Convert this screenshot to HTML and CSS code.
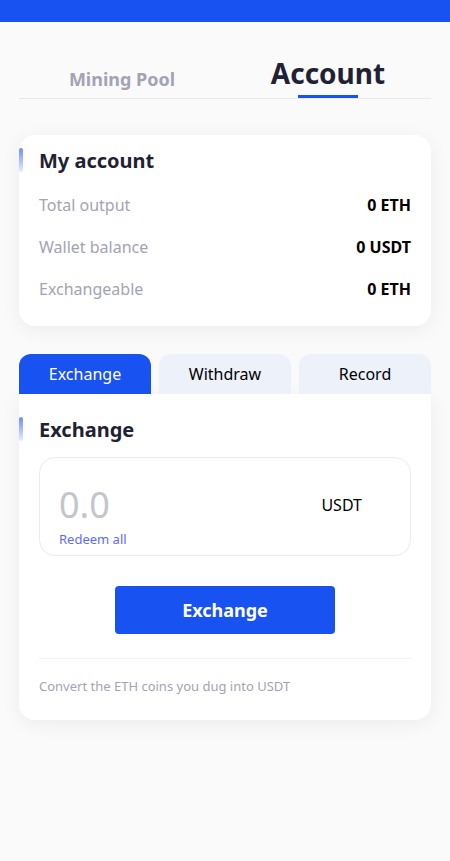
FILE: index.html
```html
<!DOCTYPE html>
<html>
<head>
<meta charset="utf-8">
<link rel="stylesheet" href="styles.css">
</head>
<body>
<div class="topbar"></div>
<nav class="nav">
  <div class="nav-item">Mining Pool</div>
  <div class="nav-item active">Account</div>
</nav>

<section class="card account">
  <h2 class="title">My account</h2>
  <div class="row"><span class="label">Total output</span><span class="value">0 ETH</span></div>
  <div class="row"><span class="label">Wallet balance</span><span class="value">0 USDT</span></div>
  <div class="row"><span class="label">Exchangeable</span><span class="value">0 ETH</span></div>
</section>

<div class="tabs">
  <div class="tab active">Exchange</div>
  <div class="tab">Withdraw</div>
  <div class="tab">Record</div>
</div>
<section class="card panel">
  <h2 class="title">Exchange</h2>
  <div class="input-box">
    <div class="input-row">
      <span class="amount">0.0</span>
      <span class="unit">USDT</span>
    </div>
    <a class="redeem">Redeem all</a>
  </div>
  <div class="btn-wrap"><button class="btn">Exchange</button></div>
  <div class="divider"></div>
  <p class="note">Convert the ETH coins you dug into USDT</p>
</section>
</body>
</html>
```
FILE: styles.css
```css
* { box-sizing: border-box; }
html, body { margin: 0; padding: 0; }
body {
  background: #fafafb;
  font-family: "Noto Sans", "Open Sans", sans-serif;
  color: #1f2233;
  width: 450px;
  min-height: 861px;
}
.topbar { height: 22px; background: #1852f1; }
.nav {
  display: flex;
  margin: 32px 19px 0;
  border-bottom: 1px solid #e6e8f0;
  height: 45px;
  align-items: flex-end;
}
.nav-item {
  flex: 1;
  text-align: center;
  font-size: 18px;
  font-weight: 700;
  color: #a3a3b3;
  padding-bottom: 7px;
}
.nav-item.active {
  font-size: 28px;
  font-weight: 700;
  color: #1f2233;
  position: relative;
  padding-bottom: 11px;
  line-height: 1;
}
.nav-item.active::after {
  content: "";
  position: absolute;
  left: 50%;
  bottom: 0;
  width: 60px;
  height: 3px;
  margin-left: -30px;
  background: #1852f1;
}
.card {
  background: #fff;
  margin: 0 19px;
  border-radius: 16px;
  box-shadow: 0 4px 20px rgba(0,0,0,0.06);
  padding: 0 20px;
}
.account { margin-top: 36px; padding-top: 13px; padding-bottom: 16px; }
.title {
  margin: 0;
  font-size: 20px;
  font-weight: 700;
  line-height: 26px;
  position: relative;
  color: #1f2233;
}
.title::before {
  content: "";
  position: absolute;
  left: -20px;
  top: 0;
  width: 4px;
  height: 24px;
  border-radius: 2px;
  background: linear-gradient(#6f8cf6, #e6ecff);
}
.row {
  display: flex;
  justify-content: space-between;
  align-items: center;
  height: 42px;
}
.row:first-of-type { margin-top: 10px; }
.label { font-size: 16px; color: #a3a3b3; }
.value { font-size: 16px; font-weight: 700; color: #000; }
.tabs {
  display: flex;
  gap: 8px;
  margin: 28px 19px 0;
}
.tab {
  flex: 1;
  height: 40px;
  line-height: 40px;
  text-align: center;
  font-size: 16px;
  background: #edf1fa;
  border-radius: 12px 12px 0 0;
  color: #000;
}
.tab.active { background: #1852f1; color: #fff; }
.panel {
  border-radius: 0 0 16px 16px;
  padding-top: 23px;
  padding-bottom: 25px;
}
.input-box {
  margin-top: 14px;
  border: 1px solid #ebebf0;
  border-radius: 16px;
  padding: 22px 20px 7px 19px;
}
.input-row {
  display: flex;
  align-items: center;
  height: 50px;
}
.amount { font-size: 36px; color: #c4c4cc; flex: 1; line-height: 1; }
.unit { font-size: 16px; color: #000; margin-right: 28px; }
.redeem {
  display: block;
  font-size: 13px;
  color: #5b6cf5;
  line-height: 18px;
}
.btn-wrap { display: flex; justify-content: center; margin-top: 30px; }
.btn {
  width: 220px;
  height: 48px;
  border: 0;
  border-radius: 4px;
  background: #1852f1;
  color: #fff;
  font-family: inherit;
  font-size: 18px;
  font-weight: 700;
}
.divider { height: 1px; background: #f0f0f3; margin-top: 24px; }
.note {
  margin: 18px 0 0;
  font-size: 13px;
  color: #a3a3b3;
  line-height: 18px;
}
```
